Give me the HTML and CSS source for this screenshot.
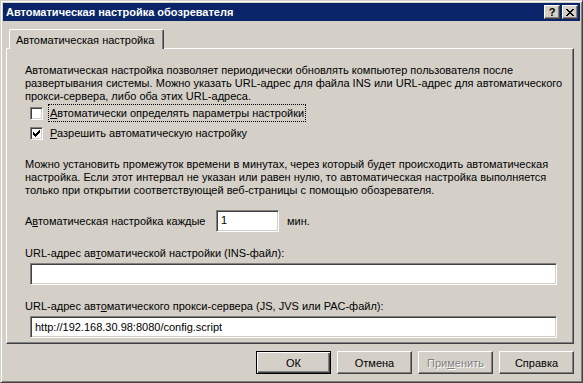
FILE: index.html
```html
<!DOCTYPE html>
<html lang="ru">
<head>
    <meta charset="UTF-8">
    <title>Автоматическая настройка обозревателя</title>
    <link rel="stylesheet" href="styles.css">
</head>
<body>
    <div class="window">
        <div class="titlebar">
            <span class="title">Автоматическая настройка обозревателя</span>
            <div class="caption-buttons">
                <span class="cap-btn help">?</span>
                <span class="cap-btn close">
                    <svg width="8" height="7" viewBox="0 0 8 7" shape-rendering="crispEdges">
                        <path d="M0 0h2v1h-2z M6 0h2v1h-2z M1 1h2v1h-2z M5 1h2v1h-2z M2 2h4v1h-4z M3 3h2v1h-2z M2 4h4v1h-4z M1 5h2v1h-2z M5 5h2v1h-2z M0 6h2v1h-2z M6 6h2v1h-2z" fill="#000"/>
                    </svg>
                </span>
            </div>
        </div>

        <div class="dialog-body">
            <div class="tabs">
                <div class="tab active">Автоматическая настройка</div>
            </div>

            <div class="panel">
                <p class="text">Автоматическая настройка позволяет периодически обновлять компьютер пользователя после развертывания системы. Можно указать URL-адрес для файла INS или URL-адрес для автоматического прокси-сервера, либо оба этих URL-адреса.</p>

                <div class="check-row">
                    <span class="checkbox"></span>
                    <span class="check-label focused"><u>А</u>втоматически определять параметры настройки</span>
                </div>
                <div class="check-row">
                    <span class="checkbox">
                        <svg width="7" height="7" viewBox="0 0 7 7" shape-rendering="crispEdges">
                            <path d="M6 0h1v1h-1z M5 1h2v1h-2z M0 2h1v1h-1z M4 2h3v1h-3z M0 3h2v1h-2z M3 3h3v1h-3z M0 4h5v1h-5z M1 5h3v1h-3z M2 6h1v1h-1z" fill="#000"/>
                        </svg>
                    </span>
                    <span class="check-label"><u>Р</u>азрешить автоматическую настройку</span>
                </div>

                <p class="text second">Можно установить промежуток времени в минутах, через который будет происходить автоматическая настройка. Если этот интервал не указан или равен нулю, то автоматическая настройка выполняется только при открытии соответствующей веб-страницы с помощью обозревателя.</p>

                <div class="interval-row">
                    <span class="interval-label">А<u>в</u>томатическая настройка каждые</span>
                    <span class="field small">1</span>
                    <span class="unit">мин.</span>
                </div>

                <div class="field-label">URL-адрес ав<u>т</u>оматической настройки (INS-файл):</div>
                <div class="field wide"></div>

                <div class="field-label">URL-адрес авт<u>о</u>матического прокси-сервера (JS, JVS или PAC-файл):</div>
                <div class="field wide">http://192.168.30.98:8080/config.script</div>
            </div>

            <div class="buttons">
                <span class="btn default">ОК</span>
                <span class="btn">Отмена</span>
                <span class="btn disabled">При<u>м</u>енить</span>
                <span class="btn">Справка</span>
            </div>
        </div>
    </div>
</body>
</html>
```

FILE: styles.css
```css
body {
    margin: 0;
    background-color: #d4d0c8;
    font-family: "Liberation Sans", Arial, sans-serif;
    font-size: 11px;
    color: #000;
}
.window {
    width: 583px;
    height: 383px;
    box-sizing: border-box;
    border: 1px solid;
    border-color: #d4d0c8 #404040 #404040 #d4d0c8;
    box-shadow: inset 1px 1px #fff, inset -1px -1px #808080;
    padding: 2px;
    background-color: #d4d0c8;
}
.titlebar {
    height: 18px;
    background-color: #0a246a;
    display: flex;
    align-items: center;
    justify-content: space-between;
    padding: 0 2px 0 3px;
}
.title {
    color: #fff;
    font-weight: bold;
    font-size: 11px;
}
.caption-buttons {
    display: flex;
    gap: 2px;
}
.cap-btn {
    width: 16px;
    height: 14px;
    box-sizing: border-box;
    background-color: #d4d0c8;
    border: 1px solid;
    border-color: #fff #404040 #404040 #fff;
    box-shadow: inset -1px -1px #808080;
    display: flex;
    align-items: center;
    justify-content: center;
}
.cap-btn.help {
    font-weight: bold;
    font-size: 11px;
    line-height: 12px;
}
.dialog-body {
    padding: 8px 0 0 3px;
}
.tabs {
    display: flex;
    padding-left: 3px;
    position: relative;
    z-index: 1;
}
.tab {
    height: 20px;
    box-sizing: border-box;
    padding: 3px 9px 0 6px;
    background-color: #d4d0c8;
    border-top: 1px solid #fff;
    border-left: 1px solid #fff;
    border-right: 1px solid #404040;
    border-radius: 2px 2px 0 0;
    box-shadow: inset -1px 0 #808080;
    margin-bottom: -1px;
    line-height: 14px;
    white-space: nowrap;
}
.panel {
    width: 568px;
    height: 296px;
    box-sizing: border-box;
    border: 1px solid;
    border-color: #fff #404040 #404040 #fff;
    box-shadow: inset -1px -1px #808080;
    padding: 15px 4px 0 18px;
}
.text {
    margin: 0;
    line-height: 13px;
}
.text.second {
    margin-top: 15px;
}
.check-row {
    display: flex;
    align-items: center;
    height: 20px;
    padding-left: 5px;
}
.checkbox {
    width: 13px;
    height: 13px;
    box-sizing: border-box;
    background-color: #fff;
    border: 1px solid;
    border-color: #808080 #fff #fff #808080;
    box-shadow: inset 1px 1px #404040, inset -1px -1px #d4d0c8;
    display: flex;
    align-items: center;
    justify-content: center;
    flex-shrink: 0;
}
.check-label {
    margin-left: 5px;
    padding: 2px 1px 1px 1px;
    border: 1px solid transparent;
    line-height: 13px;
}
.check-label.focused {
    border: 1px dotted #000;
}
.interval-row {
    display: flex;
    align-items: center;
    margin-top: 13px;
}
.interval-label {
    width: 191px;
}
.field {
    background-color: #fff;
    box-sizing: border-box;
    border: 1px solid;
    border-color: #808080 #fff #fff #808080;
    box-shadow: inset 1px 1px #404040, inset -1px -1px #d4d0c8;
    padding: 4px 4px 0 4px;
    line-height: 13px;
    white-space: nowrap;
}
.field.small {
    width: 63px;
    height: 22px;
    padding-top: 3px;
}
.unit {
    margin-left: 8px;
}
.field-label {
    margin-top: 15px;
    line-height: 13px;
}
.field.wide {
    width: 527px;
    height: 22px;
    margin: 3px 0 0 5px;
}
.buttons {
    display: flex;
    justify-content: flex-end;
    gap: 6px;
    width: 568px;
    margin-top: 7px;
}
.btn {
    width: 75px;
    height: 23px;
    box-sizing: border-box;
    border: 1px solid;
    border-color: #fff #404040 #404040 #fff;
    box-shadow: inset -1px -1px #808080;
    display: flex;
    align-items: center;
    justify-content: center;
}
.btn.default {
    border: 1px solid #000;
    box-shadow: inset 1px 1px #fff, inset -1px -1px #404040, inset -2px -2px #808080;
}
.btn.disabled {
    color: #808080;
    text-shadow: 1px 1px #fff;
}
```
